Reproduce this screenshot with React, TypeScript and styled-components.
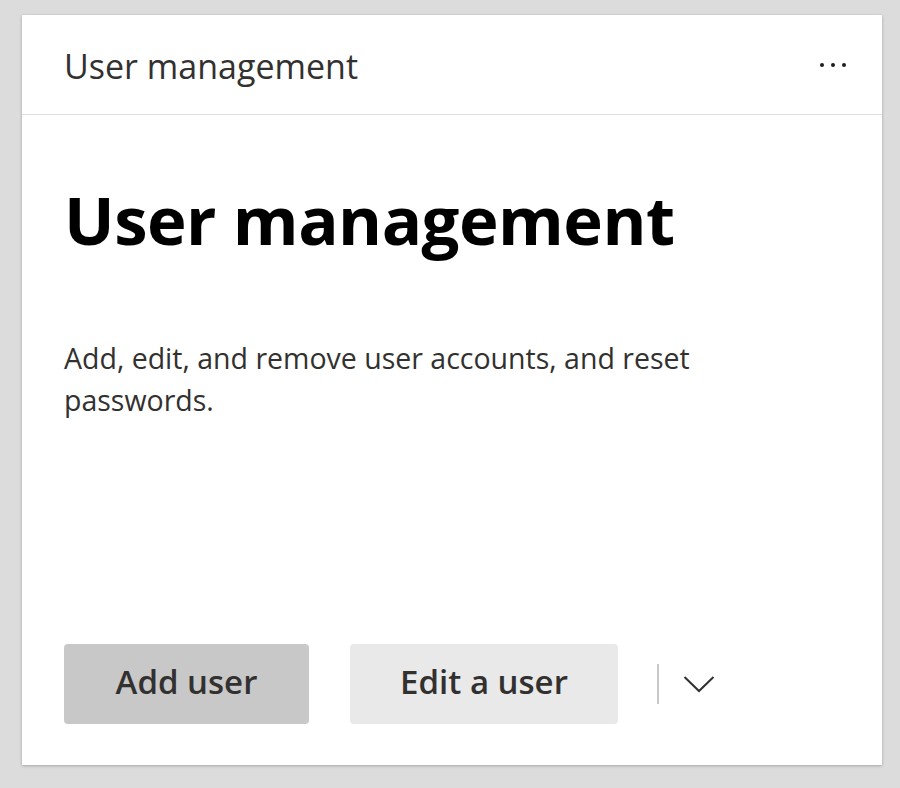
import React from 'react';
import styled, {createGlobalStyle} from 'styled-components';

const GlobalStyle = createGlobalStyle`
  html, body {
    margin: 0;
    padding: 0;
    background: #dcdcdc;
  }
  body {
    font-family: "Open Sans", "Noto Sans", sans-serif;
    color: #323130;
  }
`;

const Page = styled.div`
  width: 900px;
  height: 788px;
  padding: 15px 18px 23px 22px;
  box-sizing: border-box;
`;

const Card = styled.section`
  height: 100%;
  background: #fff;
  box-shadow: 0 1px 3px rgba(0, 0, 0, 0.22), 0 0 1px rgba(0, 0, 0, 0.12);
  display: flex;
  flex-direction: column;
`;

const Header = styled.header`
  height: 99px;
  flex: none;
  display: flex;
  align-items: center;
  justify-content: space-between;
  padding: 0 36px 0 42px;
  border-bottom: 1px solid #e1e1e1;
`;

const HeaderTitle = styled.h2`
  margin: 0 0 -2px 0;
  font-size: 34px;
  font-weight: 400;
  color: #323130;
`;

const MoreButton = styled.button`
  border: none;
  background: none;
  padding: 0;
  display: flex;
  gap: 7px;
  cursor: pointer;
`;

const Dot = styled.span`
  width: 4px;
  height: 4px;
  border-radius: 50%;
  background: #201f1e;
`;

const Body = styled.div`
  flex: 1;
  display: flex;
  flex-direction: column;
  padding: 64px 42px 41px 42px;
`;

const Title = styled.h1`
  margin: 0;
  font-size: 67px;
  line-height: 80px;
  font-weight: 700;
  color: #000;
  letter-spacing: -0.5px;
`;

const Description = styled.p`
  margin: 78px 0 0 0;
  max-width: 680px;
  font-size: 28.5px;
  line-height: 42px;
  color: #323130;
`;

const Actions = styled.div`
  margin-top: auto;
  display: flex;
  align-items: center;
`;

const ActionButton = styled.button<{$primary?: boolean; $width: number}>`
  width: ${p => p.$width}px;
  height: 80px;
  margin-right: 41px;
  padding: 0 0 5px 0;
  border: none;
  border-radius: 4px;
  background: ${p => (p.$primary ? '#c8c8c8' : '#e9e9e9')};
  color: #323130;
  font-family: "Open Sans", "Noto Sans", sans-serif;
  font-size: 33px;
  font-weight: 600;
  cursor: pointer;
`;

const Separator = styled.span`
  width: 2px;
  height: 40px;
  background: #c8c8c8;
  margin: 0 24px 0 -2px;
`;

const ChevronButton = styled.button`
  border: none;
  background: none;
  padding: 0;
  display: flex;
  cursor: pointer;
`;

export default function App() {
    return (
        <>
            <GlobalStyle/>
            <Page>
                <Card>
                    <Header>
                        <HeaderTitle>User management</HeaderTitle>
                        <MoreButton aria-label="More">
                            <Dot/><Dot/><Dot/>
                        </MoreButton>
                    </Header>
                    <Body>
                        <Title>User management</Title>
                        <Description>
                            Add, edit, and remove user accounts, and reset passwords.
                        </Description>
                        <Actions>
                            <ActionButton $primary $width={245}>Add user</ActionButton>
                            <ActionButton $width={268}>Edit a user</ActionButton>
                            <Separator/>
                            <ChevronButton aria-label="More actions">
                                <svg width="32" height="18" viewBox="0 0 32 18">
                                    <path d="M1.5 2 L16 16 L30.5 2" fill="none" stroke="#323130" strokeWidth="2"/>
                                </svg>
                            </ChevronButton>
                        </Actions>
                    </Body>
                </Card>
            </Page>
        </>
    );
}
